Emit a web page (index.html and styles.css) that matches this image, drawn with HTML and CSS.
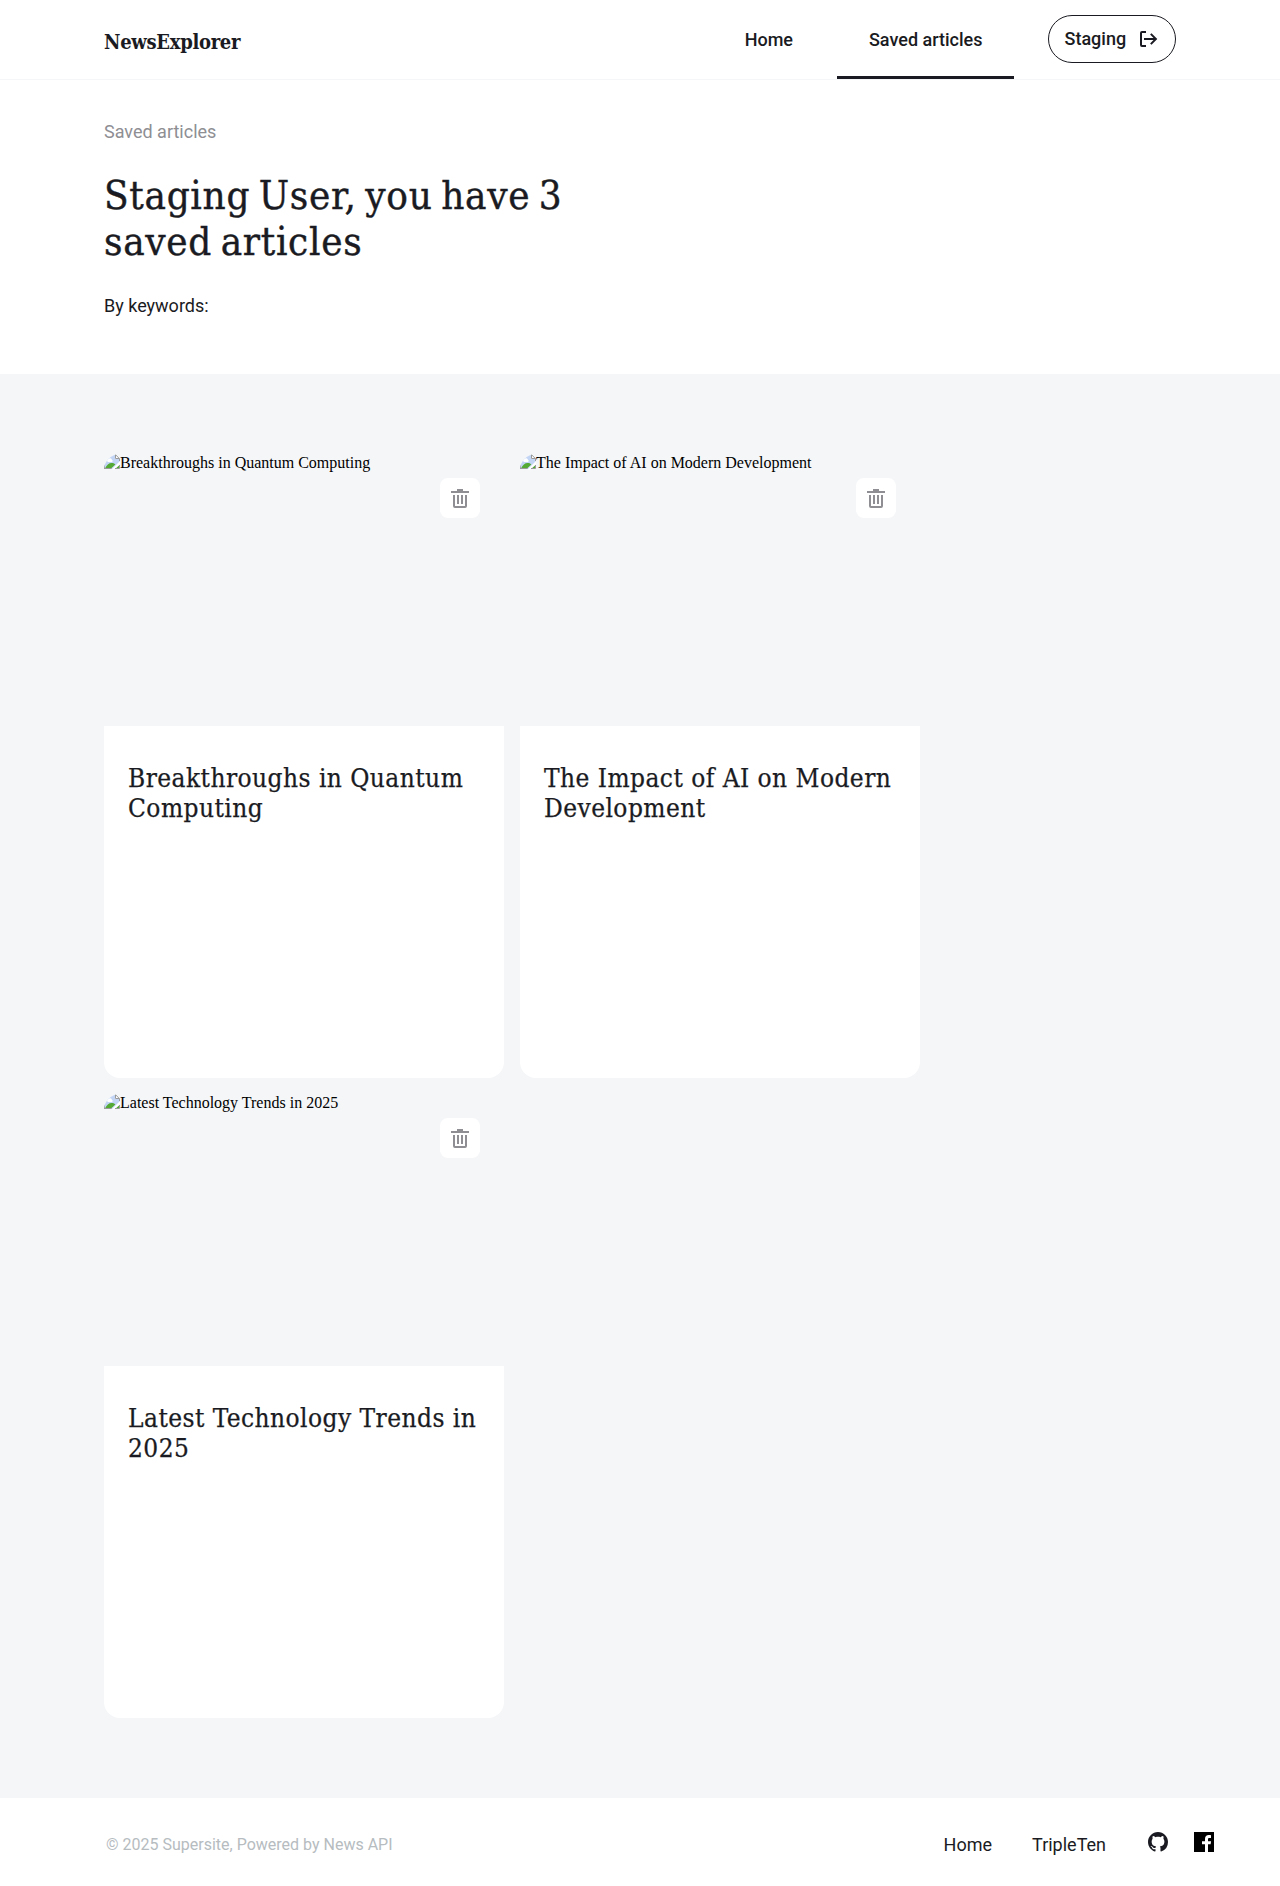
FILE: index.html
```html
<!DOCTYPE html>
<html lang="en">
<head>
<meta charset="utf-8">
<title>NewsExplorer</title>
<link rel="stylesheet" href="styles.css">
</head>
<body>
<svg class="sprite" width="0" height="0" aria-hidden="true">
  <symbol id="trash" viewBox="0 0 18 19">
    <path fill="currentColor" d="M6 0h6v2h6v2H0V2h6zM2 6h2v11h10V6h2v11a2 2 0 0 1-2 2H4a2 2 0 0 1-2-2zM6 6h2v9H6zM10 6h2v9h-2z"/>
  </symbol>
  <symbol id="missing" viewBox="0 0 16 16">
    <path fill="#c3d5f5" d="M0 0h11l5 5v3L9 15H0z"/>
    <path fill="#fff" d="M3 7a1.500 1.500 0 0 1 1.300-2 2 2 0 0 1 3.600.8A1.200 1.200 0 0 1 8 8H4z"/>
    <path fill="#55aa35" d="M1 14.500c1.500-3.500 4-5.500 6.500-5.500 1.600 0 2.800.5 3.800 1.400L7 14.500zM11.500 14.500 15 11.500v3z"/>
    <path fill="#fff" d="M16 7v3l-6 5.500H7.500z"/>
    <path fill="#fff" d="M11 0v5h5z"/>
    <path fill="none" stroke="#9a9a9a" d="M.5 15V.500h10.800l4.200 4.200V7M0 14.500h7.500M11 14.500h4.500V11M11.500.500v4h4"/>
  </symbol>
</svg>
<header class="header">
  <a class="logo">NewsExplorer</a>
  <nav class="nav">
    <a class="nav-link">Home</a>
    <a class="nav-link nav-link-active">Saved articles</a>
    <button class="logout">Staging
      <svg width="18" height="16" viewBox="0 0 18 16"><path fill="currentColor" d="M6 0v2H2v12h4v2H2a2 2 0 0 1-2-2V2a2 2 0 0 1 2-2zM11.500 2.200 17.300 8l-5.800 5.800-1.400-1.400L13.500 9H4V7h9.500l-3.400-3.400z"/></svg>
    </button>
  </nav>
</header>
<section class="intro">
  <p class="intro-label">Saved articles</p>
  <h1 class="intro-title">Staging User, you have 3 saved articles</h1>
  <p class="intro-keywords">By keywords:</p>
</section>
<main class="cards">
  <article class="card">
    <div class="card-image"><svg width="16" height="16"><use href="#missing"/></svg><span>Breakthroughs in Quantum Computing</span></div>
    <button class="delete"><svg width="18" height="19"><use href="#trash"/></svg></button>
    <div class="card-body"><h2 class="card-title">Breakthroughs in Quantum Computing</h2></div>
  </article>
  <article class="card">
    <div class="card-image"><svg width="16" height="16"><use href="#missing"/></svg><span>The Impact of AI on Modern Development</span></div>
    <button class="delete"><svg width="18" height="19"><use href="#trash"/></svg></button>
    <div class="card-body"><h2 class="card-title">The Impact of AI on Modern Development</h2></div>
  </article>
  <article class="card">
    <div class="card-image"><svg width="16" height="16"><use href="#missing"/></svg><span>Latest Technology Trends in 2025</span></div>
    <button class="delete"><svg width="18" height="19"><use href="#trash"/></svg></button>
    <div class="card-body"><h2 class="card-title">Latest Technology Trends in 2025</h2></div>
  </article>
</main>
<footer class="footer">
  <p class="copyright">© 2025 Supersite, Powered by News API</p>
  <div class="footer-nav">
    <a class="footer-link">Home</a>
    <a class="footer-link">TripleTen</a>
    <div class="social">
      <svg width="20" height="20" viewBox="0 0 16 16"><path fill="#1a1b22" d="M8 0C3.580 0 0 3.580 0 8c0 3.540 2.290 6.530 5.470 7.590.4.070.55-.17.55-.38 0-.19-.01-.82-.01-1.490-2.010.37-2.530-.49-2.690-.94-.09-.23-.48-.94-.82-1.130-.28-.15-.68-.52-.01-.53.63-.01 1.080.58 1.230.82.72 1.210 1.870.87 2.330.66.070-.52.28-.87.51-1.070-1.780-.2-3.640-.89-3.640-3.950 0-.87.31-1.590.82-2.150-.08-.2-.36-1.020.08-2.120 0 0 .67-.21 2.200.82.64-.18 1.320-.27 2-.27s1.360.09 2 .27c1.530-1.040 2.200-.82 2.200-.82.44 1.100.16 1.920.08 2.120.51.56.82 1.270.82 2.150 0 3.070-1.870 3.750-3.650 3.950.29.25.54.73.54 1.480 0 1.070-.01 1.930-.01 2.200 0 .21.15.46.55.38A8.010 8.010 0 0 0 16 8c0-4.420-3.580-8-8-8z"/></svg>
      <svg width="20" height="20" viewBox="0 0 20 20"><path fill="#000" d="M0 0h20v20h-6v-7.700h2.600l.5-3H14V7.400c0-.9.400-1.400 1.500-1.400H17V3.200c-.4-.1-1.200-.2-2.200-.2C12.400 3 11 4.400 11 6.900v2.400H8v3h3V20H0z"/></svg>
    </div>
  </div>
</footer>
</body>
</html>
```
FILE: styles.css
```css
* { box-sizing: border-box; }
body { margin: 0; background: #fff; color: #1a1b22; font-family: Roboto, sans-serif; }
h1, h2, p { margin: 0; font-weight: 400; }
svg { display: block; flex: none; }
.sprite { position: absolute; }
button { border: 0; background: none; padding: 0; font-family: inherit; color: inherit; }

.header { display: flex; justify-content: space-between; height: 80px; padding: 0 104px; border-bottom: 1px solid #f5f6f7; }
.logo { padding-top: 30px; font: 700 condensed 20px/24px "Roboto Slab", "DejaVu Serif", serif; letter-spacing: -0.3px; }
.nav { display: flex; align-items: flex-start; }
.nav-link { height: 79px; padding: 28px 32px 0; font-size: 18px; line-height: 24px; font-weight: 500; }
.nav-link:first-child { margin-right: 12px; }
.nav-link-active { padding-right: 31.5px; border-bottom: 3px solid #1a1b22; }
.logout { display: flex; align-items: center; justify-content: space-between; width: 128px; height: 48px; margin: 15px 0 0 34px; padding: 0 17px 0 15.500px; border: 1px solid #1a1b22; border-radius: 24px; font-size: 18px; line-height: 24px; font-weight: 500; }

.intro { height: 294px; padding: 40px 104px 0; }
.intro-label { font-size: 18px; line-height: 24px; color: #8e8e93; }
.intro-title { width: 490px; margin-top: 28px; font: 400 condensed 40px/46px "Roboto Slab", "DejaVu Serif", serif; letter-spacing: 0.7px; word-spacing: -3.5px; -webkit-text-stroke: 0.4px; }
.intro-keywords { margin-top: 30px; font-size: 18px; line-height: 24px; }

.cards { display: grid; grid-template-columns: 400px 400px; gap: 16px; padding: 80px 104px; background: #f5f6f8; }
.card { position: relative; height: 624px; }
.card-image { display: flex; height: 272px; overflow: hidden; border-radius: 16px 16px 0 0; color: #000; font: 16px/18px "Liberation Serif", serif; }
.delete { position: absolute; top: 24px; right: 24px; display: grid; place-items: center; width: 40px; height: 40px; border-radius: 8px; background: #fff; color: #8e8e93; }
.card-body { height: 352px; padding: 37px 24px 0; border-radius: 0 0 16px 16px; background: #fff; }
.card-title { margin-right: -8px; font: 400 condensed 26px/30px "Roboto Slab", "DejaVu Serif", serif; letter-spacing: 0.45px; -webkit-text-stroke: 0.25px; }

.footer { display: flex; justify-content: space-between; height: 88px; padding: 34px 66px 0 106px; }
.copyright { padding-top: 1px; font-size: 16px; line-height: 24px; color: #b6bcbf; }
.footer-nav { display: flex; align-items: flex-start; }
.footer-link { padding-top: 1px; margin-right: 40px; font-size: 18px; line-height: 24px; }
.social { display: flex; gap: 26px; margin-left: 2px; }
```
